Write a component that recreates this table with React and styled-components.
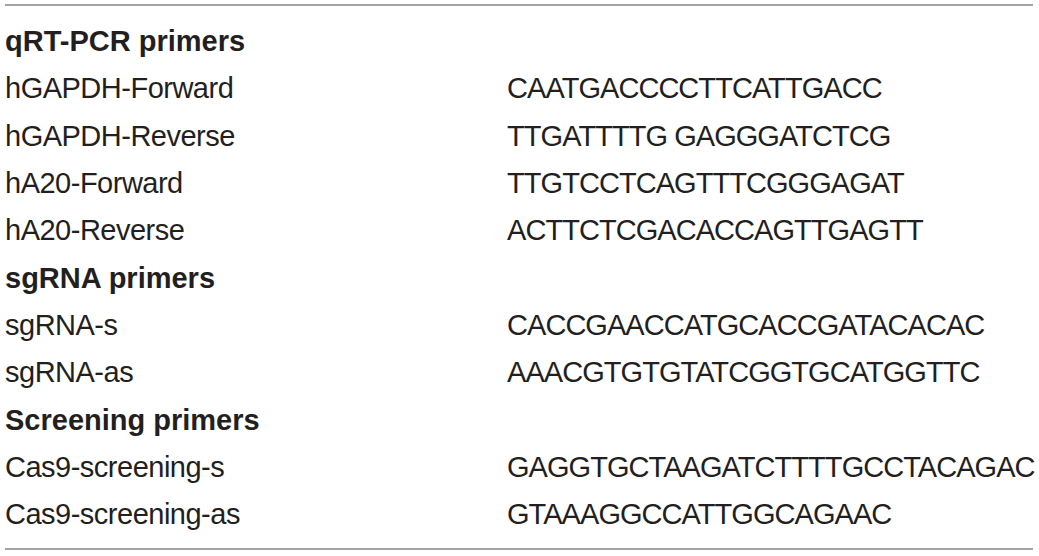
import React from 'react';
import styled, { createGlobalStyle } from 'styled-components';

const GlobalStyle = createGlobalStyle`
  body {
    margin: 0;
    background: #ffffff;
  }
`;

const Table = styled('div')`
  width: 1028px;
  margin: 4px 0 0 5px;
  border-top: 2px solid #a3a3a3;
  border-bottom: 2px solid #a3a3a3;
  padding: 12px 0 10px;
  font-family: 'Liberation Sans', Arial, sans-serif;
  color: #231f20;
`;

const Row = styled('div')`
  display: grid;
  grid-template-columns: 502px 1fr;
  height: 47.3px;
  align-items: center;
  font-size: 29px;
  font-weight: ${props => (props.heading ? 700 : 400)};
`;

const Cell = styled('div')`
  white-space: nowrap;
  letter-spacing: ${props => (props.seq ? '-0.95px' : props.heading ? '0' : '-0.5px')};
`;

const sections = [
  {
    title: 'qRT-PCR primers',
    rows: [
      ['hGAPDH-Forward', 'CAATGACCCCTTCATTGACC'],
      ['hGAPDH-Reverse', 'TTGATTTTG GAGGGATCTCG'],
      ['hA20-Forward', 'TTGTCCTCAGTTTCGGGAGAT'],
      ['hA20-Reverse', 'ACTTCTCGACACCAGTTGAGTT'],
    ],
  },
  {
    title: 'sgRNA primers',
    rows: [
      ['sgRNA-s', 'CACCGAACCATGCACCGATACACAC'],
      ['sgRNA-as', 'AAACGTGTGTATCGGTGCATGGTTC'],
    ],
  },
  {
    title: 'Screening primers',
    rows: [
      ['Cas9-screening-s', 'GAGGTGCTAAGATCTTTTGCCTACAGAC'],
      ['Cas9-screening-as', 'GTAAAGGCCATTGGCAGAAC'],
    ],
  },
];

export default function App() {
  return (
    <>
      <GlobalStyle />
      <Table>
        {sections.map(section => (
          <React.Fragment key={section.title}>
            <Row heading>
              <Cell heading>{section.title}</Cell>
              <Cell />
            </Row>
            {section.rows.map(([name, seq]) => (
              <Row key={name}>
                <Cell>{name}</Cell>
                <Cell seq>{seq}</Cell>
              </Row>
            ))}
          </React.Fragment>
        ))}
      </Table>
    </>
  );
}
